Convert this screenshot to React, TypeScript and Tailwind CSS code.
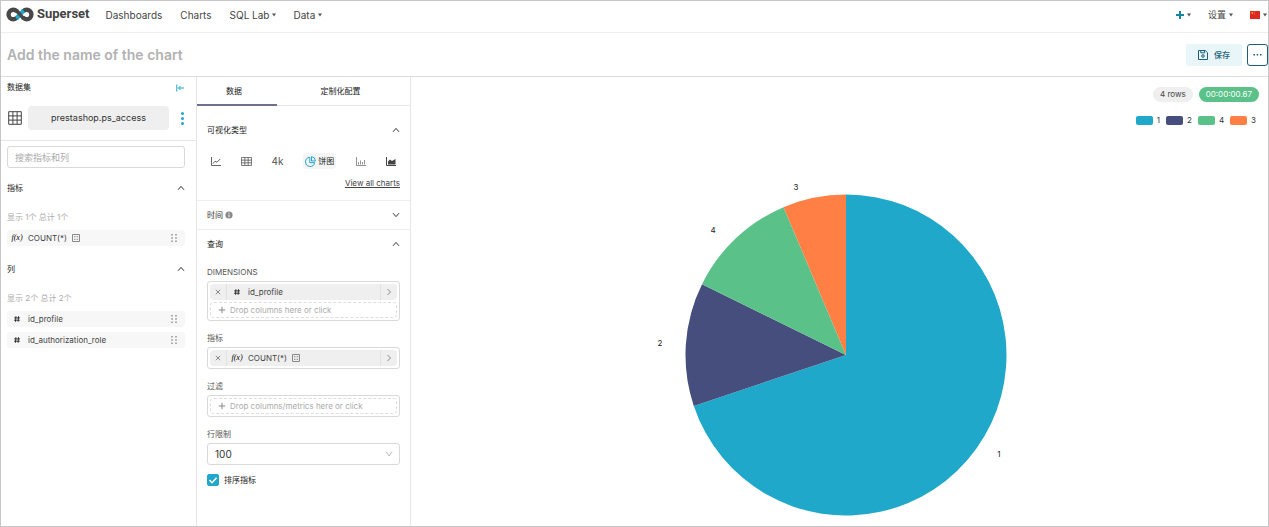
import type { ReactNode } from "react";

const slices = [
  { label: "1", value: 2515, color: "#1fa8c9", lx: 349, ly: 277 },
  { label: "2", value: 447, color: "#454e7c", lx: 10, ly: 166 },
  { label: "4", value: 409, color: "#5ac189", lx: 63, ly: 53 },
  { label: "3", value: 229, color: "#ff7f44", lx: 146, ly: 10 },
];

function Caret() {
  return (
    <svg viewBox="0 0 6 4" className="ml-0.5 h-1 w-1.5 shrink-0" fill="#555">
      <path d="M1 .5h4L3 3.5z" />
    </svg>
  );
}

function Chevron({ down = false }: { down?: boolean }) {
  return (
    <svg viewBox="0 0 8 8" className="h-2 w-2 shrink-0" fill="none" stroke="#333">
      <path d={down ? "M1 2.2l3 3.4 3-3.4" : "M1 5.8l3-3.4 3 3.4"} />
    </svg>
  );
}

function Logo() {
  return (
    <svg viewBox="0 0 28 15" className="h-[15px] w-7" fill="none" strokeWidth="4.4">
      <path d="M16.5 4.600c1.500-1.200 2.700-1.900 4.100-1.900a4.800 4.800 0 0 1 0 9.600c-1.400 0-2.600-.7-4.100-1.900" stroke="#484848" />
      <path d="M11.500 10.400c-1.500 1.200-2.700 1.900-4.100 1.900a4.800 4.800 0 0 1 0-9.600c1.400 0 2.600.7 4.100 1.900" stroke="#484848" />
      <path d="M10.200 11.300c1.300-.9 2.500-2.200 3.800-3.800 1.300-1.600 2.500-2.900 3.800-3.800" stroke="#20a7c9" />
      <path d="M10.600 4c1.200.9 2.200 2 3.400 3.500s2.200 2.600 3.400 3.500" stroke="#484848" strokeWidth="3.600" />
    </svg>
  );
}

function Fx() {
  return <span className="w-3 text-center font-['Liberation_Serif',serif] text-[8px] leading-3 text-black italic">f(x)</span>;
}

function Hash() {
  return (
    <svg viewBox="0 0 8 8" className="mx-0.5 h-2 w-2 shrink-0" fill="none" stroke="#111" strokeWidth=".8">
      <path d="M2.900 1.200L2.500 6.800M5.500 1.200L5.100 6.800M1.200 2.900h5.800M1 5.200h5.800" />
    </svg>
  );
}

function CalcIcon() {
  return (
    <svg viewBox="0 0 8 8" className="h-2 w-2 shrink-0" fill="none" stroke="#888">
      <path d="M.5.5h7v7h-7z" />
      <path d="M2 2.700h1.500M4.600 2.700h1.500M2 5.300h1.500M4.600 5.300h1.500" />
    </svg>
  );
}

function Grip() {
  return (
    <svg viewBox="0 0 6 8" className="ml-auto h-2 w-1.5 shrink-0" fill="#aaa">
      <path d="M0 0h2v1.500H0zM4 0h2v1.500H4zM0 3.200h2v1.500H0zM4 3.200h2v1.500H4zM0 6.400h2v1.500H0zM4 6.400h2v1.500H4z" />
    </svg>
  );
}

function GridIcon({ className }: { className: string }) {
  return (
    <svg viewBox="0 0 14 14" className={className} preserveAspectRatio="none" fill="none" stroke="#444">
      <path d="M.7.700h12.600v12.600H.7zM.7 4.900h12.600M.7 9.100h12.600M4.900.700v12.600M9.100.700v12.600" />
    </svg>
  );
}

function FieldRow({ icon, name, calc = false }: { icon: ReactNode; name: string; calc?: boolean }) {
  return (
    <li className="flex h-4 items-center rounded-sm bg-[#f7f7f7] pr-2 pl-1">
      {icon}
      <span className="mr-[5px] ml-[5px] text-[8px] leading-3">{name}</span>
      {calc && <CalcIcon />}
      <Grip />
    </li>
  );
}

function Section({ title }: { title: string }) {
  return (
    <button className="flex h-4 w-full items-center justify-between text-[8px] text-[#222]">
      {title}
      <Chevron />
    </button>
  );
}

function Pill({ icon, name, calc = false }: { icon: ReactNode; name: string; calc?: boolean }) {
  return (
    <div className="flex h-4 items-center rounded-sm bg-[#efefef] text-[8px]">
      <button aria-label="Remove" className="flex h-full w-[17px] items-center justify-center border-r border-[#e2e2e2]">
        <svg viewBox="0 0 6 6" className="h-1.5 w-1.5" stroke="#888">
          <path d="M.8.800l4.400 4.400M5.200.800L.8 5.200" />
        </svg>
      </button>
      <span className="ml-1 flex items-center">{icon}</span>
      <span className="mr-[5px] ml-[5px] leading-3">{name}</span>
      {calc && <CalcIcon />}
      <button aria-label="Edit" className="ml-auto flex h-full w-[17px] items-center justify-center border-l border-[#e2e2e2]">
        <svg viewBox="0 0 6 8" className="h-2 w-1.5" fill="none" stroke="#888">
          <path d="M1.500 1l3 3-3 3" />
        </svg>
      </button>
    </div>
  );
}

function DropZone({ children }: { children: ReactNode }) {
  return (
    <button className="flex h-4 w-full items-center gap-1 rounded-sm border border-dashed border-[#ddd] px-[7px] text-[8px] text-[#aaa]">
      <svg viewBox="0 0 8 8" className="h-2 w-2" stroke="#888">
        <path d="M4 .800v6.400M.8 4h6.400" />
      </svg>
      {children}
    </button>
  );
}

function Control({ label, children }: { label: string; children: ReactNode }) {
  return (
    <div className="mb-[11px]">
      <h3 className="mb-[3px] text-[8px] leading-3 text-[#555]">{label}</h3>
      <div className="flex flex-col gap-0.5 rounded-[3px] border border-[#d9d9d9] p-0.5">{children}</div>
    </div>
  );
}

function TopNav() {
  return (
    <header className="flex h-8 items-center border-b border-[#eee] pb-[3px] pl-[5px] text-[10px]">
      <a href="#" className="mb-0.5 flex items-center gap-[3px]">
        <Logo />
        <span className="font-['Roboto',sans-serif] text-[13px] leading-4 font-bold text-[#444]">Superset</span>
      </a>
      <nav className="ml-4 flex items-center gap-4">
        <a href="#">Dashboards</a>
        <a href="#" className="px-0.5">Charts</a>
        <button className="flex items-center">SQL Lab<Caret /></button>
        <button className="flex items-center">Data<Caret /></button>
      </nav>
      <div className="ml-auto flex items-center gap-4">
        <button aria-label="New" className="flex items-center">
          <svg viewBox="0 0 8 8" className="h-2 w-2" stroke="#1985a0" strokeWidth="2">
            <path d="M4 0v8M0 4h8" />
          </svg>
          <Caret />
        </button>
        <button className="flex items-center text-[9px]">设置<Caret /></button>
        <button aria-label="中文" className="flex items-center">
          <svg viewBox="0 0 10 8" className="h-2 w-2.5">
            <path fill="#dc2a22" d="M0 0h10v8H0z" />
            <path fill="#f7b54a" d="M1.500 1.200h1.500v1.500H1.500zM4 .700h.7v.7H4zM4 2.800h.7v.7H4z" />
          </svg>
          <Caret />
        </button>
      </div>
    </header>
  );
}

function DatasetPanel() {
  return (
    <aside className="w-[196px] shrink-0 border-r border-[#e6e6e6]">
      <div className="border-b border-[#e6e6e6] pt-[3px] pr-3 pb-2.5 pl-1.5">
        <div className="flex h-3.5 items-center justify-between text-[8px] text-[#222]">
          <h2>数据集</h2>
          <button aria-label="Collapse" className="mt-0.5">
            <svg viewBox="0 0 8 8" className="h-2 w-2" fill="none" stroke="#20a7c9">
              <path d="M.8.500v7M2.500 4H8M4.600 1.900L2.500 4l2.100 2.100" />
            </svg>
          </button>
        </div>
        <div className="mt-3 flex items-center">
          <GridIcon className="ml-px h-3.5 w-3.5" />
          <button className="ml-1.5 h-6 flex-1 rounded bg-[#efefef] text-[9px] text-[#333]">prestashop.ps_access</button>
          <button aria-label="More" className="ml-3 flex">
            <svg viewBox="0 0 3 13" className="h-[13px] w-[3px]" fill="#20a7c9">
              <circle cx="1.5" cy="1.5" r="1.5" />
              <circle cx="1.5" cy="6.5" r="1.5" />
              <circle cx="1.5" cy="11.5" r="1.5" />
            </svg>
          </button>
        </div>
      </div>
      <div className="pt-[5px] pr-[11px] pl-1.5">
        <input
          type="search"
          aria-label="搜索指标和列"
          placeholder="搜索指标和列"
          className="block h-[22px] w-full rounded-[3px] border border-[#d9d9d9] px-[7px] text-[9px] placeholder:text-[#aaa]"
        />
        <div className="mt-3">
          <Section title="指标" />
          <p className="mt-[15px] mb-[7px] text-[8px] leading-3 text-[#aaa]">显示 1个 总计 1个</p>
          <ul>
            <FieldRow icon={<Fx />} name="COUNT(*)" calc />
          </ul>
        </div>
        <div className="mt-[15px]">
          <Section title="列" />
          <p className="mt-[15px] mb-[7px] text-[8px] leading-3 text-[#aaa]">显示 2个 总计 2个</p>
          <ul className="flex flex-col gap-[5px]">
            <FieldRow icon={<Hash />} name="id_profile" />
            <FieldRow icon={<Hash />} name="id_authorization_role" />
          </ul>
        </div>
      </div>
    </aside>
  );
}

function VizTypes() {
  return (
    <div className="mt-[15px] flex h-4 items-center justify-between px-1">
      <button aria-label="Line chart">
        <svg viewBox="0 0 10 9" className="h-[9px] w-2.5" fill="none" stroke="#555" strokeWidth=".9">
          <path d="M.5 0v8.500H10M2 6.500l2-2.300 2 1L9.200 2" />
        </svg>
      </button>
      <button aria-label="Table">
        <GridIcon className="h-[9px] w-[11px]" />
      </button>
      <button aria-label="Big number" className="text-[10px] leading-4 text-[#555]">4k</button>
      <button className="flex h-4 items-center gap-0.5 rounded-sm bg-[#f5f5f5] px-0.5 text-[8px] text-[#222]">
        <svg viewBox="0 0 11 11" className="h-[11px] w-[11px]" fill="none" stroke="#20a7c9">
          <path d="M4.800 1.300a4.600 4.600 0 1 0 4.900 5.400H4.800zM6.500.600v4.400h3.900A4.400 4.400 0 0 0 6.500.600z" />
        </svg>
        饼图
      </button>
      <button aria-label="Bar chart">
        <svg viewBox="0 0 10 9" className="h-[9px] w-2.5" fill="none" stroke="#777" strokeWidth=".8">
          <path d="M.5 0v8.500H10M2.500 7.500V5M4.500 7.500V3.500M6.500 7.500V5M8.500 7.500V3" />
        </svg>
      </button>
      <button aria-label="Area chart">
        <svg viewBox="0 0 10 9" className="h-[9px] w-2.5" fill="#444" stroke="#444">
          <path fill="none" d="M.5 0v8.500H10" />
          <path stroke="none" d="M2 7.500V4.500L4 2.500l2 1.500 3.500-2v5.500z" />
        </svg>
      </button>
    </div>
  );
}

function ControlPanel() {
  return (
    <section className="w-[214px] shrink-0 border-r border-[#e6e6e6] text-[#444]">
      <div role="tablist" className="flex h-[29px] border-b border-[#e6e6e6] text-[8px] text-[#222]">
        <button role="tab" aria-selected="true" className="-mb-px w-20 shrink-0 border-b-2 border-[#6b7090] pr-1.5">数据</button>
        <button role="tab" aria-selected="false" className="flex-1 pr-1.5">定制化配置</button>
      </div>
      <div className="border-b border-[#eee] px-2.5 pt-4 pb-[11px]">
        <Section title="可视化类型" />
        <VizTypes />
        <a href="#" className="mt-2 block text-right text-[8px] leading-3 underline">View all charts</a>
      </div>
      <button className="flex h-[29px] w-full items-center border-b border-[#eee] px-2.5 text-[8px] text-[#333]">
        时间
        <svg viewBox="0 0 8 8" className="mr-auto ml-0.5 h-2 w-2">
          <circle cx="4" cy="4" r="3.600" fill="#888" />
          <path d="M4 1.700v1M4 3.500v2.700" stroke="#fff" />
        </svg>
        <Chevron down />
      </button>
      <div className="px-2.5 pt-1.5">
        <Section title="查询" />
        <div className="mt-3.5">
          <Control label="DIMENSIONS">
            <Pill icon={<Hash />} name="id_profile" />
            <DropZone>Drop columns here or click</DropZone>
          </Control>
          <Control label="指标">
            <Pill icon={<Fx />} name="COUNT(*)" calc />
          </Control>
          <Control label="过滤">
            <DropZone>Drop columns/metrics here or click</DropZone>
          </Control>
        </div>
        <label htmlFor="row-limit" className="mb-[3px] block text-[8px] leading-3 text-[#555]">行限制</label>
        <div className="relative">
          <select id="row-limit" className="block h-[22px] w-full appearance-none rounded-[3px] border border-[#d9d9d9] bg-white px-[7px] text-[10px] text-[#333]">
            <option>100</option>
            <option>1000</option>
          </select>
          <svg viewBox="0 0 8 8" className="pointer-events-none absolute top-[7px] right-[7px] h-2 w-2" fill="none" stroke="#bbb">
            <path d="M1 1.500l3 4.500 3-4.500" />
          </svg>
        </div>
        <label className="mt-[9px] flex items-center gap-[5px] text-[8px] text-[#222]">
          <span className="relative h-3 w-3">
            <input type="checkbox" defaultChecked className="block h-3 w-3 appearance-none rounded-xs border border-[#20a7c9] checked:bg-[#20a7c9]" />
            <svg viewBox="0 0 12 12" className="pointer-events-none absolute inset-0" fill="none" stroke="#fff" strokeWidth="1.500">
              <path d="M2.500 6l2.500 2.700 4.600-5" />
            </svg>
          </span>
          排序指标
        </label>
      </div>
    </section>
  );
}

function PieChart() {
  const cx = 196;
  const cy = 178;
  const r = 160.5;
  const total = slices.reduce((sum, s) => sum + s.value, 0);
  const point = (v: number) => {
    const a = (v / total) * Math.PI * 2;
    return `${cx + r * Math.sin(a)} ${cy - r * Math.cos(a)}`;
  };
  let start = 0;

  return (
    <svg viewBox="0 0 392 339" className="mx-auto mt-[51px] w-[392px] max-w-full" role="img" aria-label="Pie chart">
      {slices.map((s) => {
        const from = start;
        start += s.value;
        const large = s.value > total / 2 ? 1 : 0;
        return (
          <path
            key={s.label}
            fill={s.color}
            d={`M${cx} ${cy}L${point(from)}A${r} ${r} 0 ${large} 1 ${point(start)}Z`}
          />
        );
      })}
      {slices.map((s) => (
        <text key={s.label} x={s.lx} y={s.ly + 3} textAnchor="middle" fill="#222" fontSize="8">
          {s.label}
        </text>
      ))}
    </svg>
  );
}

export default function App() {
  return (
    <div className="flex min-h-screen flex-col border border-[#c6c6c6] bg-white font-['Inter','Noto_Sans_CJK_SC',sans-serif] text-[#444]">
      <TopNav />
      <div className="flex h-11 items-center border-b border-[#dedede] pl-1.5">
        <input
          aria-label="Chart name"
          placeholder="Add the name of the chart"
          className="min-w-0 flex-1 text-sm font-semibold placeholder:text-[#b2b2b2]"
        />
        <button className="flex h-[22px] w-14 items-center justify-center gap-1.5 rounded-xs bg-[#e9f6f9] text-[8px] font-medium text-[#1a5f75]">
          <svg viewBox="0 0 10 10" className="h-2.5 w-2.5" fill="none" stroke="#1a5f75">
            <path d="M.5.500h6.800l2.200 2.200v6.800h-9zM2.800.500v2.300h3.800V.500" />
            <circle cx="5" cy="6" r="1.300" />
          </svg>
          保存
        </button>
        <button aria-label="More actions" className="ml-[5px] flex h-[22px] w-[21px] items-center justify-center rounded-[3px] border border-[#1a5f75]">
          <svg viewBox="0 0 9 2" className="h-0.5 w-[9px]" fill="#1a5f75">
            <path d="M.5 0h1.500v1.500H.5zM3.700 0h1.500v1.500H3.700zM7 0h1.500v1.500H7z" />
          </svg>
        </button>
      </div>
      <div className="flex flex-1">
        <DatasetPanel />
        <ControlPanel />
        <main className="min-w-0 flex-1">
          <div className="flex justify-end gap-1.5 pt-2.5 pr-[9px] text-[8px] leading-[15px]">
            <span className="rounded-full bg-[#efefef] px-[7px]">4 rows</span>
            <span className="rounded-full bg-[#5ac189] px-[7px] text-white">00:00:00.67</span>
          </div>
          <ul className="mt-3 flex justify-end gap-1.5 pr-3 text-[8px] leading-3 text-[#333]">
            {slices.map((s) => (
              <li key={s.label} className="flex items-center gap-1">
                <span className="h-[9px] w-[17px] rounded-xs" style={{ backgroundColor: s.color }} />
                {s.label}
              </li>
            ))}
          </ul>
          <div className="pl-3">
            <PieChart />
          </div>
        </main>
      </div>
    </div>
  );
}
